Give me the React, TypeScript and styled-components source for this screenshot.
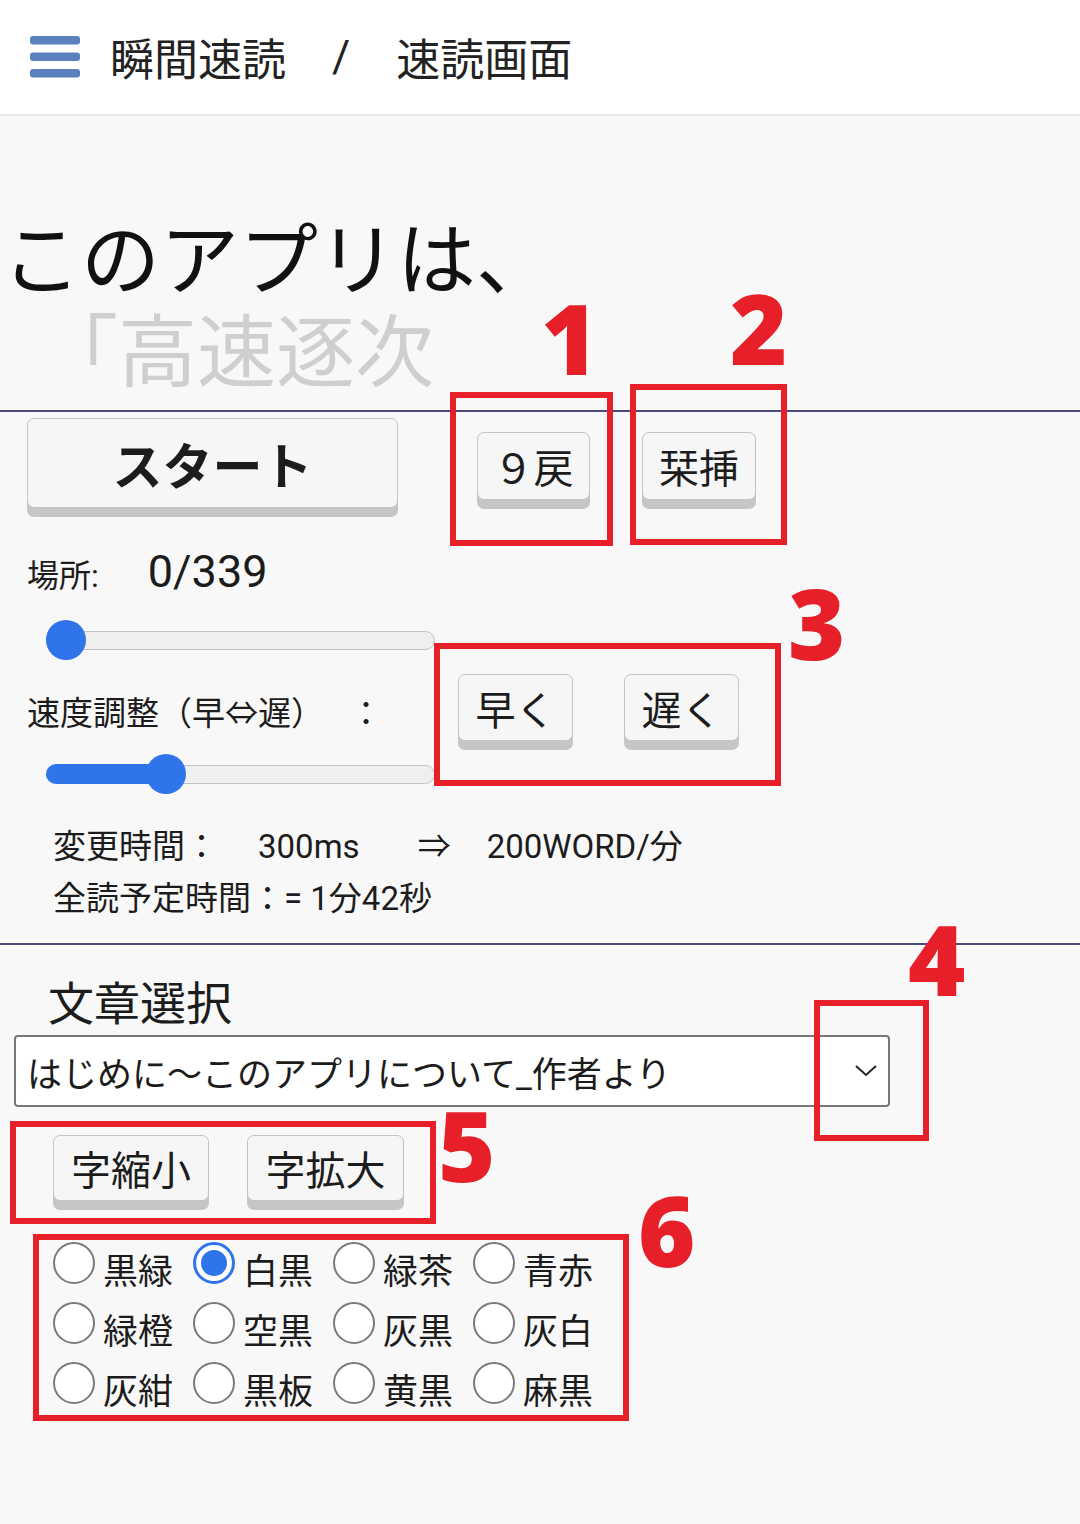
import React from "react";
import styled, { createGlobalStyle } from "styled-components";

const Global = createGlobalStyle`
  html, body { margin: 0; padding: 0; background: #f8f8f8; }
  body { font-family: Roboto, "Noto Sans CJK JP", sans-serif; color: #1a1a1a; }
  * { box-sizing: border-box; }
`;

const Page = styled.div`
  position: relative;
  width: 1080px;
  min-height: 1524px;
  background: #f8f8f8;
  overflow: hidden;
`;

const Header = styled.header`
  height: 116px;
  background: #ffffff;
  border-bottom: 2px solid #e6e6e6;
  display: flex;
  align-items: center;
  padding-left: 30px;
`;

const Title = styled.h1`
  margin: 0 0 0 30px;
  font-size: 44px;
  font-weight: 400;
  color: #222;
  display: flex;
  align-items: center;
`;

const Slash = styled.span`
  margin: 0 46px;
`;

const Display = styled.div`
  height: 294px;
  padding: 100px 0 0 2px;
  font-size: 79px;
  line-height: 92px;
  overflow: hidden;
`;

const DisplayLine = styled.div<{ $dim?: boolean; $indent?: number }>`
  color: ${(p) => (p.$dim ? "#cfcfcf" : "#111")};
  padding-left: ${(p) => p.$indent ?? 0}px;
  white-space: nowrap;
`;

const Rule = styled.hr<{ $mt?: number }>`
  margin: ${(p) => p.$mt ?? 0}px 0 0 0;
  border: none;
  height: 2px;
  background: #4a4a7c;
`;

const Controls = styled.section`
  padding: 6px 0 0 27px;
`;

const Row = styled.div`
  display: flex;
  align-items: flex-start;
`;

const KeyButton = styled.button<{ $w: number; $h: number; $fs: number; $bold?: boolean; $ml?: number; $mt?: number }>`
  width: ${(p) => p.$w}px;
  height: ${(p) => p.$h}px;
  margin-left: ${(p) => p.$ml ?? 0}px;
  margin-top: ${(p) => p.$mt ?? 0}px;
  margin-bottom: 9px;
  padding: 0;
  background: #f6f6f6;
  border: 1.5px solid #c4c4c4;
  border-radius: 7px;
  box-shadow: 0 9px 0 #c6c6c6;
  font-family: Roboto, "Noto Sans CJK JP", sans-serif;
  font-size: ${(p) => p.$fs}px;
  font-weight: ${(p) => (p.$bold ? 700 : 400)};
  color: #1c1c1c;
  display: flex;
  align-items: center;
  justify-content: center;
  cursor: pointer;
`;

const PlaceRow = styled.div`
  display: flex;
  align-items: baseline;
  margin-top: 28px;
`;

const Label = styled.span`
  font-size: 32px;
  color: #1c1c1c;
  white-space: nowrap;
`;

const Count = styled.span`
  font-size: 45px;
  margin-left: 49px;
  color: #1c1c1c;
`;

const SliderWrap = styled.div<{ $mt: number }>`
  position: relative;
  width: 389px;
  height: 40px;
  margin: ${(p) => p.$mt}px 0 0 19px;
  display: flex;
  align-items: center;
`;

const Track = styled.div`
  position: relative;
  width: 100%;
  height: 19px;
  border-radius: 10px;
  background: #efefef;
  border: 1.5px solid #c2c2c2;
`;

const Fill = styled.div`
  position: absolute;
  left: -1.5px;
  top: -1.5px;
  bottom: -1.5px;
  border-radius: 10px;
  background: #2f74eb;
`;

const Thumb = styled.div`
  position: absolute;
  top: 0;
  width: 40px;
  height: 40px;
  border-radius: 50%;
  background: #2f74eb;
`;

const Slider = ({ pos, mt }: { pos: number; mt: number }) => (
  <SliderWrap $mt={mt}>
    <Track>{pos > 20 && <Fill style={{ width: pos + 1.5 }} />}</Track>
    <Thumb style={{ left: pos - 20 }} />
  </SliderWrap>
);

const SpeedRow = styled.div`
  display: flex;
  align-items: center;
  margin-top: 11px;
`;

const SpeedLabel = styled.span`
  width: 431px;
  font-size: 33px;
  color: #1c1c1c;
  white-space: nowrap;
`;

const Colon = styled.span`
  margin-left: 42px;
`;

const Info = styled.div`
  margin: 27px 0 0 26px;
  font-size: 33px;
  line-height: 52px;
  color: #1c1c1c;
`;

const InfoLine = styled.div`
  display: flex;
  white-space: nowrap;
`;

const Gap = styled.span<{ $w: number }>`
  display: inline-block;
  width: ${(p) => p.$w}px;
`;

const Lower = styled.section`
  padding: 31px 0 0 14px;
`;

const SectionTitle = styled.h2`
  margin: 0 0 0 34px;
  font-size: 46px;
  font-weight: 400;
  line-height: 56px;
  color: #1c1c1c;
`;

const Select = styled.div`
  margin-top: 3px;
  width: 876px;
  height: 72px;
  background: #fff;
  border: 2px solid #787878;
  border-radius: 4px;
  display: flex;
  align-items: center;
  justify-content: space-between;
  padding: 0 10px 0 11px;
  font-size: 35px;
  color: #1c1c1c;
`;

const ButtonRow = styled.div`
  display: flex;
  margin: 28px 0 0 39px;
  gap: 38px;
`;

const RadioGrid = styled.div`
  display: grid;
  grid-template-columns: repeat(4, 140px);
  grid-auto-rows: 60px;
  margin: 32px 0 0 39px;
`;

const RadioItem = styled.label`
  display: flex;
  align-items: flex-start;
  font-size: 35px;
  color: #1c1c1c;
`;

const RadioCircle = styled.span<{ $on?: boolean }>`
  flex: 0 0 auto;
  width: 42px;
  height: 42px;
  border-radius: 50%;
  border: ${(p) => (p.$on ? "3px solid #2f74eb" : "2.5px solid #7a7a7a")};
  background: #fff;
  display: flex;
  align-items: center;
  justify-content: center;
  &::after {
    content: "";
    display: ${(p) => (p.$on ? "block" : "none")};
    width: 26px;
    height: 26px;
    border-radius: 50%;
    background: #2f74eb;
  }
`;

const RadioText = styled.span`
  margin: 10px 0 0 8px;
  line-height: 42px;
`;

const Mark = styled.div<{ $x: number; $y: number; $w: number; $h: number }>`
  position: absolute;
  left: ${(p) => p.$x}px;
  top: ${(p) => p.$y}px;
  width: ${(p) => p.$w}px;
  height: ${(p) => p.$h}px;
  border: 6px solid #e61f29;
  pointer-events: none;
`;

const Num = styled.div<{ $x: number; $y: number }>`
  position: absolute;
  left: ${(p) => p.$x}px;
  top: ${(p) => p.$y - 17}px;
  font-family: "Noto Sans", "Liberation Sans", sans-serif;
  font-weight: 900;
  font-size: 98px;
  line-height: 1;
  color: #e61f29;
  pointer-events: none;
`;

const Hamburger = () => (
  <svg width="50" height="42" viewBox="0 0 50 42">
    <rect x="0" y="0" width="50" height="8.5" rx="3" fill="#5a80be" />
    <rect x="0" y="16.5" width="50" height="8.5" rx="3" fill="#5a80be" />
    <rect x="0" y="33" width="50" height="8.5" rx="3" fill="#5a80be" />
  </svg>
);

const Chevron = () => (
  <svg width="24" height="14" viewBox="0 0 24 14">
    <polyline points="2,2 12,11 22,2" fill="none" stroke="#222" strokeWidth="2" />
  </svg>
);

const colors = [
  ["黒緑", "白黒", "緑茶", "青赤"],
  ["緑橙", "空黒", "灰黒", "灰白"],
  ["灰紺", "黒板", "黄黒", "麻黒"],
];

export default function App() {
  return (
    <>
      <Global />
      <Page>
        <Header>
          <Hamburger />
          <Title>
            瞬間速読<Slash>/</Slash>速読画面
          </Title>
        </Header>

        <Display>
          <DisplayLine>このアプリは、</DisplayLine>
          <DisplayLine $dim $indent={37}>「高速逐次</DisplayLine>
        </Display>
        <Rule />

        <Controls>
          <Row>
            <KeyButton $w={371} $h={90} $fs={50} $bold>スタート</KeyButton>
            <KeyButton $w={113} $h={68} $fs={40} $ml={79} $mt={14}>９戻</KeyButton>
            <KeyButton $w={114} $h={68} $fs={40} $ml={52} $mt={14}>栞挿</KeyButton>
          </Row>
          <PlaceRow>
            <Label>場所:</Label>
            <Count>0/339</Count>
          </PlaceRow>
          <Slider pos={20} mt={22} />
          <SpeedRow>
            <SpeedLabel>
              速度調整（早⇔遅）<Colon>：</Colon>
            </SpeedLabel>
            <KeyButton $w={115} $h={67} $fs={40} $mt={3}>早く</KeyButton>
            <KeyButton $w={115} $h={67} $fs={40} $ml={51} $mt={3}>遅く</KeyButton>
          </SpeedRow>
          <Slider pos={120} mt={4} />
          <Info>
            <InfoLine>
              変更時間：<Gap $w={40} />300ms<Gap $w={58} />⇒<Gap $w={36} />200WORD/分
            </InfoLine>
            <InfoLine>全読予定時間：= 1分42秒</InfoLine>
          </Info>
        </Controls>
        <Rule $mt={18} />

        <Lower>
          <SectionTitle>文章選択</SectionTitle>
          <Select>
            <span>はじめに〜このアプリについて_作者より</span>
            <Chevron />
          </Select>
          <ButtonRow>
            <KeyButton $w={156} $h={66} $fs={40}>字縮小</KeyButton>
            <KeyButton $w={157} $h={66} $fs={40}>字拡大</KeyButton>
          </ButtonRow>
          <RadioGrid>
            {colors.flat().map((c) => (
              <RadioItem key={c}>
                <RadioCircle $on={c === "白黒"} />
                <RadioText>{c}</RadioText>
              </RadioItem>
            ))}
          </RadioGrid>
        </Lower>

        <Mark $x={450} $y={392} $w={163} $h={154} />
        <Mark $x={630} $y={384} $w={157} $h={161} />
        <Mark $x={434} $y={643} $w={347} $h={143} />
        <Mark $x={814} $y={1000} $w={115} $h={141} />
        <Mark $x={10} $y={1121} $w={426} $h={103} />
        <Mark $x={33} $y={1234} $w={596} $h={187} />

        <Num $x={541} $y={305}>1</Num>
        <Num $x={730} $y={295}>2</Num>
        <Num $x={788} $y={590}>3</Num>
        <Num $x={908} $y={926}>4</Num>
        <Num $x={438} $y={1112}>5</Num>
        <Num $x={638} $y={1197}>6</Num>
      </Page>
    </>
  );
}
